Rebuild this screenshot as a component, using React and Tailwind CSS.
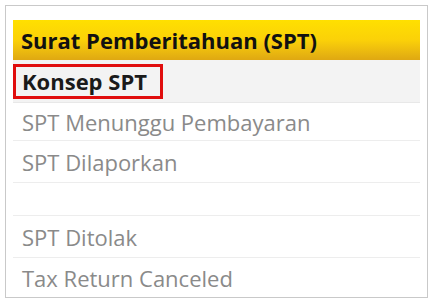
import React from 'react';

const rows = [
  { label: 'SPT Menunggu Pembayaran', h: 'h-[38px]' },
  { label: 'SPT Dilaporkan', h: 'h-[42px]' },
  { label: '', h: 'h-[33px]' },
  { label: 'SPT Ditolak', h: 'h-[42px]' },
  { label: 'Tax Return Canceled', h: 'h-[40px]', last: true },
];

export default function App() {
  return (
    <div className="w-[434px] h-[305px] bg-white pl-[5px] pt-[5px] font-['Open_Sans',sans-serif]">
      <div className="w-[423px] h-[293px] border border-[#c9c9c9] px-[7px] pt-[14px] overflow-hidden">
        {/* Header */}
        <div className="h-[40px] flex items-center px-[8px] bg-gradient-to-b from-[#ffe000] via-[#fbd108] to-[#dfa812]">
          <span className="text-[22px] leading-none font-bold text-[#111]">Surat Pemberitahuan (SPT)</span>
        </div>

        {/* Selected row */}
        <div className="h-[43px] bg-[#f3f3f3] flex items-center border-b border-[#e8e8e8]">
          <div className="h-[35px] w-[150px] border-[3px] border-[#e00d0d] flex items-center px-[6px]">
            <span className="text-[22px] leading-none font-bold text-[#1a1a1a]">Konsep SPT</span>
          </div>
        </div>

        {rows.map((r, i) => (
          <div
            key={i}
            className={`${r.h} flex items-center px-[9px] ${r.last ? '' : 'border-b border-[#ededed]'}`}
          >
            <span className="text-[22px] leading-none text-[#8a8a8a]">{r.label}</span>
          </div>
        ))}
      </div>
    </div>
  );
}
